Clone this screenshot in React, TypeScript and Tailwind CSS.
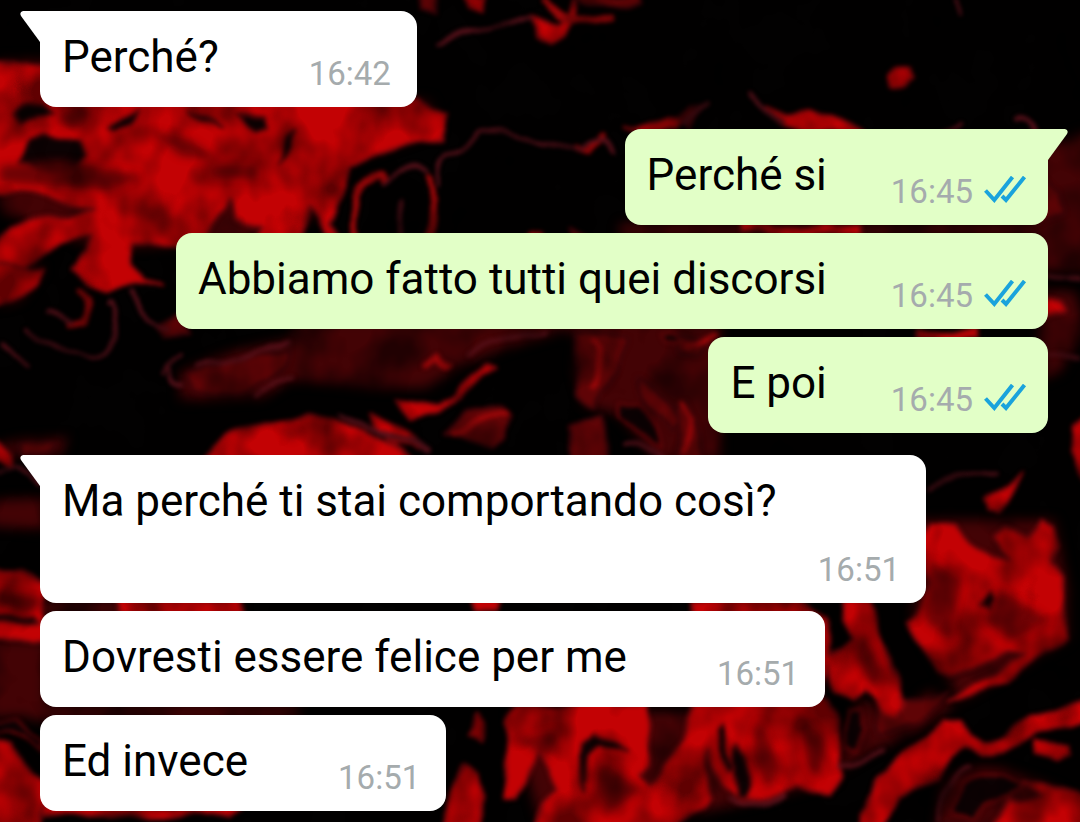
type Message = {
  text: string;
  time: string;
  own?: boolean;
  first?: boolean;
  long?: boolean;
};

const groups: Message[][] = [
  [{ text: 'Perché?', time: '16:42', first: true }],
  [
    { text: 'Perché si', time: '16:45', own: true, first: true },
    { text: 'Abbiamo fatto tutti quei discorsi', time: '16:45', own: true },
    { text: 'E poi', time: '16:45', own: true },
  ],
  [
    { text: 'Ma perché ti stai comportando così?', time: '16:51', first: true, long: true },
    { text: 'Dovresti essere felice per me', time: '16:51' },
    { text: 'Ed invece', time: '16:51' },
  ],
];

// wallpaper layers, painted from back to front
const dimShapes = [
  'M180 372 L230 352 L290 340 L300 320 H720 V460 H655 L640 440 L620 415 L585 405 L575 370 L578 335 L560 332 L505 348 L460 366 L425 388 L380 388 L340 384 L290 380 L262 398 L180 400 Z',
  'M1040 150 L1090 130 V270 L1040 272 Z',
  'M1040 290 L1075 292 L1085 330 L1060 372 L1040 380 Z',
  'M-10 500 L45 498 V530 L-10 526 Z',
  'M-10 640 H45 V720 L20 716 L-10 718 Z',
  'M30 600 H240 V616 H30 Z M30 704 H300 V720 H30 Z M620 224 H1055 V236 H620 Z',
  'M-10 448 L20 440 L68 438 L60 456 H-10 Z',
  'M30 264 L44 268 L20 300 L0 306 Z',
  'M860 700 L900 716 L930 690 L955 705 L915 732 L870 752 L840 770 L845 730 Z',
  'M940 790 Q960 762 1000 768 L1060 790 L1090 830 H936 Z',
  'M0 60 H60 V100 H430 L440 130 L350 160 L310 220 L240 240 L100 250 L0 210 Z',
  'M920 520 H1055 L1068 590 V640 L960 700 L912 620 Z',
  'M510 712 H830 L836 780 L760 800 L650 822 H540 Z',
];

const redShapes = [
  'M-10 63 L45 66 L60 98 H417 L449 114 L443 137 L408 145 L375 153 L353 166 L346 188 L333 206 L326 222 L341 245 L325 232 L312 208 L303 235 L294 260 H241 L246 246 L262 226 L234 220 L228 202 L215 218 L207 235 L188 243 L151 243 L130 245 L133 264 L143 280 L160 284 L135 285 L104 291 L85 284 L73 271 L88 255 L90 237 L61 242 L24 264 L-10 288 V252 L9 228 L30 219 L66 217 L98 207 L61 202 L22 197 L-10 195 Z',
  'M-10 262 L20 267 L44 269 L34 286 L14 301 L-10 308 Z',
  'M200 460 L225 438 L260 424 L310 416 L336 417 L360 430 L390 445 L420 462 Z',
  'M372 416 L404 436 L418 449 L392 444 L378 432 Z',
  'M400 400 L405 422 L420 418 L438 413 L462 396 L478 377 L496 367 L484 366 L470 375 L458 395 L438 406 Z',
  'M-10 436 L12 452 L14 470 L-10 458 Z',
  'M-10 571 L22 572 L45 584 V640 L-10 638 Z',
  'M-10 742 L14 748 L26 770 L42 780 V832 H-10 Z',
  'M40 806 H240 L230 816 H40 Z',
  'M120 598 H240 V616 H120 Z M470 602 L500 604 L496 614 H474 Z',
  'M690 598 H800 L812 612 L826 616 V650 L840 650 L854 640 L842 618 L844 598 H868 L884 640 L900 680 L906 700 L898 716 L880 706 L864 690 L850 700 L836 692 L824 660 V720 H700 Z',
  'M914 640 L908 620 L930 588 L922 540 L930 526 L956 524 L968 540 L990 558 L1006 562 L996 536 L1006 526 L1032 536 L1042 524 L1052 530 L1054 564 L1066 580 L1066 636 L1040 654 L1010 680 L972 698 L950 700 L986 682 L1010 664 L1026 650 L1010 650 L980 668 L948 676 L932 668 Z',
  'M986 500 L1004 486 L1024 472 L1010 492 L1000 514 L990 512 Z',
  'M1074 424 L1090 412 V490 L1073 450 Z',
  'M860 814 L878 780 L902 756 L926 738 L946 720 L962 720 L970 738 L984 744 L1004 738 L1026 716 L1046 708 L1090 702 V722 L1056 728 L1034 734 L1006 752 L984 756 L964 750 L948 760 L938 776 L916 784 L900 792 L886 830 H862 Z',
  'M1032 742 L1072 746 L1074 756 L1060 762 L1036 756 Z',
  'M1024 778 L1050 786 L1090 796 V832 H990 L1010 800 L1040 796 Z',
  'M506 724 L520 704 H648 L652 724 L650 760 L640 776 L652 784 L682 740 L694 700 H828 L838 750 L840 776 L828 794 L814 792 L800 784 L780 796 L762 804 L738 800 L722 784 L710 750 L706 796 L690 812 L670 832 H536 L544 806 L556 794 L550 770 L540 750 L530 770 L520 800 L506 802 Z',
  'M450 790 L462 766 L474 772 L482 800 L480 832 H438 Z',
  'M470 736 L482 714 L486 722 L480 744 Z',
  'M462 -6 H484 L478 9 L466 8 Z',
  'M530 18 L556 24 L566 20 L574 2 L576 20 L564 36 L550 44 L538 36 Z',
  'M886 74 L894 66 L910 68 L916 78 L904 86 L888 86 Z',
  'M764 102 L786 110 L812 106 L836 116 L852 128 L872 138 L844 134 L810 130 L784 122 Z',
  'M640 124 L668 118 L682 122 L676 130 H626 Z',
  'M504 234 L510 250 L520 246 L530 230 L542 232 L540 262 H510 Z',
  'M1040 302 L1060 304 L1066 312 L1040 318 Z',
  'M740 226 H860 V234 H740 Z M920 330 H980 V338 H920 Z',
];

const darkShapes = [
  'M12 118 Q24 104 42 104 L52 112 L34 116 L20 124 Z',
  'M18 164 L26 144 L44 134 L78 140 L84 156 L72 166 L40 170 Z',
  'M110 128 L124 116 L142 106 L132 122 L116 132 Z',
  'M186 110 L204 116 L222 128 L202 120 Z',
  'M236 112 L264 118 L268 130 L254 130 L244 122 Z',
  'M276 166 L288 138 L296 132 L292 150 L284 160 Z',
  'M980 606 L988 592 L996 600 L990 610 Z',
  'M734 796 L732 766 L740 748 L746 760 L748 790 L744 800 Z',
  'M716 730 L722 722 L734 770 L728 772 Z',
  'M580 742 L594 732 L612 738 L626 748 L600 744 L588 758 L584 790 L578 760 Z',
  'M844 712 L856 708 L864 730 L856 752 L844 750 Z',
  'M-10 722 L16 722 L30 736 L45 744 V756 L24 740 L8 734 L-10 736 Z',
  'M620 402 L640 406 L652 430 L660 446 L636 436 L616 420 Z',
  'M950 812 L968 784 L1000 776 L1024 782 L1008 798 L990 806 L976 820 Z',
  'M660 338 H678 V344 L662 346 Z',
  'M-10 614 L36 618 L40 624 L-10 620 Z',
];

// murky patches inside the red areas
const shadowShapes = [
  'M210 166 H256 V178 H212 Z',
  'M60 160 L140 176 L110 190 L0 182 L0 166 Z',
  'M60 112 L90 108 L84 128 L62 126 Z',
  'M150 130 L190 140 L220 160 L180 156 Z',
  'M930 560 L960 580 L950 640 L925 620 Z',
  'M1000 590 L1050 620 L1010 640 L985 620 Z',
  'M600 760 L640 790 L610 812 L596 790 Z',
  'M520 740 L560 730 L548 760 Z',
  'M760 720 L780 770 L768 790 L752 750 Z',
  'M800 716 L826 740 L818 780 L806 760 Z',
  'M860 630 L880 670 L874 690 L860 660 Z',
  'M-10 590 L40 600 L30 612 L-10 600 Z',
  'M280 428 L300 434 L290 440 Z',
];

const brightStrands = [
  'M354 250 Q344 200 372 174 Q382 166 384 176',
  'M424 255 Q434 210 426 178',
  'M545 0 Q556 22 580 22 L610 16',
  'M574 148 L588 152 L602 138',
  'M684 450 L690 420 L684 404',
  'M424 366 L436 356 L450 366',
  'M76 292 Q92 304 84 322 L70 326',
  'M690 346 Q704 344 716 334',
  'M456 434 Q490 416 506 412',
  'M596 340 Q606 350 592 384',
];

const thinStrands = [
  'M436 184 Q434 158 444 150 Q470 148 480 134 Q510 126 540 142 L580 150 Q604 128 612 156',
  'M384 180 Q410 160 424 172',
  'M28 326 Q60 352 92 356 Q124 352 116 316 Q108 296 106 304',
  'M0 340 L30 366',
  'M46 312 Q60 322 72 324',
  'M132 294 Q144 324 164 330',
  'M158 372 Q162 360 182 354',
  'M164 368 Q166 384 180 384',
  'M200 368 Q240 362 290 342',
  'M466 356 Q500 338 548 332',
  'M260 398 Q276 380 290 378',
  'M340 412 Q380 440 430 450',
  'M726 796 Q756 818 790 794',
  'M838 766 Q860 766 884 752',
  'M928 488 Q960 470 996 470',
  'M936 822 Q932 780 972 770',
  'M440 43 Q480 24 530 20',
  'M750 94 Q764 108 784 118',
  'M684 124 Q694 110 706 102',
  'M956 0 L962 12',
  'M936 138 L956 124',
  'M1014 118 Q1030 110 1038 132',
  'M1048 276 L1080 278',
  'M1048 354 L1080 358',
  'M0 476 L18 468 L40 488',
  'M620 446 Q650 440 666 460',
  'M400 200 Q402 230 400 250',
];

const mutedShapes = [
  'M446 434 L466 410 L502 406 L512 414 L506 438 L492 446 Z',
  'M576 336 L606 330 L626 340 L618 372 L600 390 L594 410 L576 396 Z',
  'M638 374 L654 386 L676 420 L668 430 L646 406 Z',
  'M680 338 H710 L700 358 L678 350 Z',
  'M572 428 L600 420 L606 460 H574 Z',
  'M674 410 L688 400 L704 460 H678 Z',
  'M190 376 L230 362 L290 350 L276 376 L250 392 L192 390 Z',
  'M152 325 L176 312 L190 338 H160 Z',
  'M570 232 L600 240 L596 258 L580 256 Z',
  'M20 444 L60 440 L50 452 L22 456 Z',
  'M420 -6 H438 L440 14 L424 8 Z',
  'M640 -6 L640 4 L580 4 L570 -6 Z',
  'M676 120 L690 106 L702 104 L690 126 Z',
  'M1040 176 L1060 190 L1064 214 L1040 222 Z',
  'M878 700 L920 696 L950 690 L920 722 L880 732 Z',
];

function Wallpaper() {
  return (
    <svg
      className="absolute inset-0 h-full w-full"
      viewBox="0 0 1080 822"
      preserveAspectRatio="xMidYMid slice"
      aria-hidden="true"
    >
      <defs>
        <filter
          id="marble"
          filterUnits="userSpaceOnUse"
          x="-20"
          y="-20"
          width="1120"
          height="862"
          colorInterpolationFilters="sRGB"
        >
          <feTurbulence type="fractalNoise" baseFrequency="0.022" numOctaves="2" seed="4" result="noise" />
          <feDisplacementMap in="SourceGraphic" in2="noise" scale="18" xChannelSelector="R" yChannelSelector="G" />
          <feGaussianBlur stdDeviation="2" />
        </filter>
        <filter id="mottle" x="0" y="0" width="100%" height="100%" colorInterpolationFilters="sRGB">
          <feTurbulence type="fractalNoise" baseFrequency="0.02 0.016" numOctaves="3" seed="11" />
          <feColorMatrix values="0 0 0 0 0  0 0 0 0 0  0 0 0 0 0  2.6 0 0 0 -1" />
        </filter>
        <filter id="soft" x="-20%" y="-20%" width="140%" height="140%" colorInterpolationFilters="sRGB">
          <feGaussianBlur stdDeviation="6" />
        </filter>
        <filter id="haze" x="-20%" y="-20%" width="140%" height="140%" colorInterpolationFilters="sRGB">
          <feGaussianBlur stdDeviation="4" />
        </filter>
      </defs>
      <rect width="1080" height="822" fill="#020101" />
      <g fill="#430305" filter="url(#soft)">
        {dimShapes.map((d) => (
          <path key={d} d={d} />
        ))}
      </g>
      <g filter="url(#marble)" strokeLinejoin="round" strokeLinecap="round">
        <g fill="#5f0406" stroke="#3a0408" strokeWidth="3">
          {mutedShapes.map((d) => (
            <path key={d} d={d} />
          ))}
        </g>
        <g fill="#c30204" stroke="#7d060a" strokeWidth="3">
          {redShapes.map((d) => (
            <path key={d} d={d} />
          ))}
        </g>
        <g fill="#0c0203" stroke="#5c0407" strokeWidth="3">
          {darkShapes.map((d) => (
            <path key={d} d={d} />
          ))}
        </g>
        <g fill="none" stroke="#940608" strokeWidth="7">
          {brightStrands.map((d) => (
            <path key={d} d={d} />
          ))}
        </g>
        <g fill="none" stroke="#561019" strokeWidth="4">
          {thinStrands.map((d) => (
            <path key={d} d={d} />
          ))}
        </g>
      </g>
      <g fill="#5a0204" opacity="0.8" filter="url(#haze)">
        {shadowShapes.map((d) => (
          <path key={d} d={d} />
        ))}
      </g>
      <rect width="1080" height="822" filter="url(#mottle)" opacity="0.5" />
    </svg>
  );
}

function ReadTicks() {
  return (
    <svg
      className="mb-[9px] h-7 w-11 shrink-0"
      viewBox="0 0 44 28"
      fill="none"
      stroke="#1aa3dc"
      strokeWidth="4"
      role="img"
      aria-label="Letto"
    >
      <path d="M1.5 14.5 L10.3 24 L28.5 1" />
      <path d="M18 20 L22 24 L40.5 1" />
    </svg>
  );
}

function Tail({ own }: { own?: boolean }) {
  return own ? (
    <svg className="absolute top-0 left-full h-8 w-5 fill-[#e2ffc7]" viewBox="0 0 20 32" aria-hidden="true">
      <path d="M0 0 H17 Q21 1 19 5 L0 31 Z" />
    </svg>
  ) : (
    <svg className="absolute top-0 right-full h-8 w-5 fill-white" viewBox="0 0 20 32" aria-hidden="true">
      <path d="M20 0 H3 Q-1 1 1 5 L20 31 Z" />
    </svg>
  );
}

function Bubble({ text, time, own, first, long }: Message) {
  const side = own ? 'self-end bg-[#e2ffc7] pr-5' : 'self-start bg-white pr-[26px]';
  const corner = first ? (own ? 'rounded-tr-none' : 'rounded-tl-none') : '';
  const layout = long ? 'w-[886px] flex-col gap-[10px]' : own ? 'items-end gap-16' : 'items-end gap-[90px]';

  return (
    <li className={`relative flex max-w-full rounded-2xl pt-5 pb-3 pl-[22px] ${side} ${corner} ${layout}`}>
      {first && <Tail own={own} />}
      <p className="pb-3 text-[44px] leading-[52px] text-black">{text}</p>
      <div className="flex items-end gap-[11px] self-end">
        <time className="text-[33px] leading-[42px] text-[#a5abad]">{time}</time>
        {own && <ReadTicks />}
      </div>
    </li>
  );
}

export default function App() {
  return (
    <main className="relative min-h-screen overflow-hidden bg-black font-[Roboto,sans-serif]">
      <Wallpaper />
      <div className="relative flex flex-col gap-[22px] pt-[11px] pr-8 pb-[11px] pl-10">
        {groups.map((group, i) => (
          <ul key={i} className="flex flex-col gap-2">
            {group.map((message) => (
              <Bubble key={message.text} {...message} />
            ))}
          </ul>
        ))}
      </div>
    </main>
  );
}
